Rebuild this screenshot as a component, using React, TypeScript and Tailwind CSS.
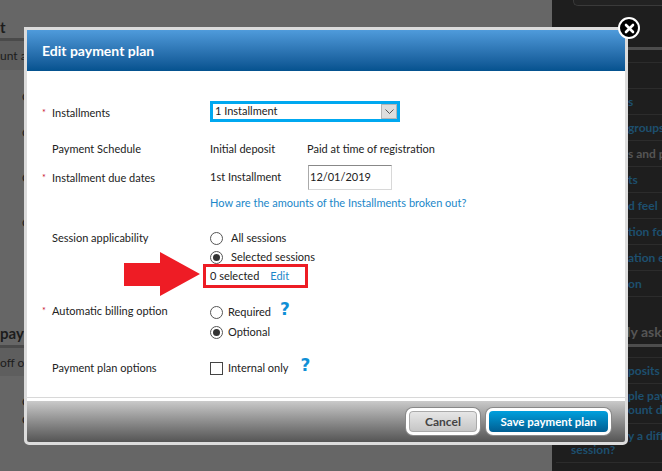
const font = "font-['Lato','Liberation_Sans',sans-serif]";

const sideLinks = [
  { text: "", color: "text-[#1d4f6e]" },
  { text: "s", color: "text-[#1d4f6e]" },
  { text: "groups", color: "text-[#1d4f6e]" },
  { text: "s and p", color: "text-[#555]" },
  { text: "ts", color: "text-[#1d4f6e]" },
  { text: "d feel", color: "text-[#1d4f6e]" },
  { text: "tion fo", color: "text-[#1d4f6e]" },
  { text: "ation e", color: "text-[#1d4f6e]" },
  { text: "on", color: "text-[#1d4f6e]" },
];

function Radio({ checked }: { checked?: boolean }) {
  return (
    <span className="flex size-[13px] shrink-0 items-center justify-center rounded-full border border-[#555] bg-white">
      {checked && <span className="size-[7px] rounded-full bg-[#333]" />}
    </span>
  );
}

function Help() {
  return <span className="font-['DejaVu_Sans',sans-serif] text-[17px] leading-none font-bold text-[#0f8fd6]">?</span>;
}

function Row({
  label,
  required,
  className,
  labelClass,
  children,
}: {
  label: string;
  required?: boolean;
  className?: string;
  labelClass?: string;
  children: React.ReactNode;
}) {
  return (
    <div className={`flex ${className ?? ""}`}>
      <div className={`relative w-[168px] shrink-0 pl-[10px] leading-[16px] ${labelClass ?? ""}`}>
        {required && <span className="absolute left-0 text-[9px] text-[#c8102e]">*</span>}
        {label}
      </div>
      <div className="min-w-0 flex-1">{children}</div>
    </div>
  );
}

export default function App() {
  return (
    <div className={`relative flex h-[471px] w-[662px] overflow-hidden bg-[#666] ${font}`}>
      {/* page behind the overlay */}
      <div className="w-[552px] shrink-0 pt-[19px] text-[#1c1c1c]">
        <div className="h-[22px] border-b-[3px] border-[#4a4a4a] text-[15px] leading-[16px] font-bold">t</div>
        <div className="h-[29px] bg-[#5e5e5e] pt-[7px] text-[12px] leading-[16px]">unt a</div>
        <div className="h-[256px] pt-[20px] pl-[22px] text-[12px] leading-[14px]">
          <div>O</div>
          <div className="mt-[22px]">O</div>
          <div className="mt-[31px]">O</div>
          <div className="mt-[31px]">O</div>
        </div>
        <div className="h-[22px] border-b-[3px] border-[#4a4a4a] pt-0 text-[15px] leading-[14px] font-bold">pay</div>
        <div className="h-[28px] bg-[#5e5e5e] pt-[7px] text-[12px] leading-[16px]">off ou</div>
        <div className="pt-[19px] pl-[22px] text-[12px] leading-[14px]">
          <div>O</div>
          <div className="mt-[4px]">O</div>
        </div>
      </div>
      <div className="flex-1 overflow-hidden bg-[#1e1e1e] pl-[4px] text-[12px] font-bold whitespace-nowrap">
        <div className="ml-[17px] h-[6px] rounded-bl-[5px] border-b border-l border-[#3a3a3a] bg-[#222]" />
        <div className="mt-[41px] h-[3px] bg-[#4d4d4d]" />
        <div className="mt-[12px]">
          {sideLinks.map((l) => (
            <div key={l.text} className={`h-[26px] border-t border-[#2c2c2c] pt-[4px] pl-[72px] leading-[18px] ${l.color}`}>
              {l.text}
            </div>
          ))}
        </div>
        <div className="h-[48px] border-t border-[#2c2c2c] pt-[26px] pl-[71px] text-[14px] leading-[18px] text-[#555]">ly ask</div>
        <div className="h-[3px] bg-[#4d4d4d]" />
        <div className="mt-[10px] text-[#1d4f6e]">
          <div className="h-[26px] border-t border-[#2c2c2c] pt-[4px] pl-[72px] leading-[18px]">posits w</div>
          <div className="h-[40px] border-t border-[#2c2c2c] pt-[5px] pl-[72px] leading-[14px]">
            <div>ple pay</div>
            <div>ount du</div>
          </div>
          <div className="h-[40px] border-t border-b border-[#2c2c2c] pt-[5px] pl-[15px] leading-[14px]">
            <div className="pl-[57px]">y a diff</div>
            <div>session?</div>
          </div>
        </div>
      </div>

      {/* modal */}
      <div className="absolute top-[27px] left-[24px] flex h-[418px] w-[604px] flex-col rounded-b-[5px] border-[3px] border-[#dcdcdc] bg-white text-[11px] text-[#222]">
        <div className="flex h-[41px] shrink-0 items-center bg-gradient-to-b from-[#4f9bdb] to-[#04528f] pl-[15px] text-[14px] font-bold text-white">
          Edit payment plan
        </div>

        <div className="flex-1 pt-[30px] pl-[15px]">
          <Row label="Installments" required labelClass="pt-[4px]">
            <div className="flex h-[21px] w-[190px] items-center border-[3px] border-[#00a8f0] bg-white pl-[2px]">
              <span className="flex-1">1 Installment</span>
              <span className="flex h-[15px] w-[16px] items-center justify-center border border-[#b5b5b5] bg-[#dedede]">
                <svg width="9" height="5" viewBox="0 0 9 5" fill="none" stroke="#555">
                  <path d="M0.5 0.5 4.5 4.5 8.5 0.5" />
                </svg>
              </span>
            </div>
          </Row>
          <Row label="Payment Schedule" className="mt-[19px]">
            <div className="flex leading-[16px]">
              <span className="w-[97px]">Initial deposit</span>
              <span>Paid at time of registration</span>
            </div>
          </Row>
          <Row label="Installment due dates" required className="mt-[8px]" labelClass="pt-[5px]">
            <div className="flex items-center">
              <span className="w-[98px]">1st Installment</span>
              <span className="flex h-[25px] w-[84px] items-center border border-[#d8d8d8] border-t-[#888] border-l-[#aaa] pl-[1px]">12/01/2019</span>
            </div>
            <div className="mt-[5px] leading-[16px] text-[#1b87c9]">How are the amounts of the Installments broken out?</div>
          </Row>
          <Row label="Session applicability" className="mt-[19px]">
            <div className="flex h-[16px] items-center gap-[8px]">
              <Radio />
              All sessions
            </div>
            <div className="mt-[3px] flex h-[16px] items-center gap-[8px]">
              <Radio checked />
              Selected sessions
            </div>
            <div className="-mt-[1px] -ml-[7px] flex h-[24px] w-[105px] items-center border-[3px] border-[#ed1c24] pl-[4px]">
              0 selected
              <span className="ml-[11px] text-[#1b87c9]">Edit</span>
            </div>
          </Row>
          <Row label="Automatic billing option" required className="mt-[15px]">
            <div className="mt-[1px] flex h-[16px] items-center gap-[5px]">
              <Radio />
              Required
              <span className="ml-[4px] -mt-[4px]"><Help /></span>
            </div>
            <div className="mt-[4px] flex h-[16px] items-center gap-[5px]">
              <Radio checked />
              Optional
            </div>
          </Row>
          <Row label="Payment plan options" className="mt-[20px]">
            <div className="flex h-[16px] items-center gap-[5px]">
              <span className="size-[13px] border border-[#444] bg-white" />
              Internal only
              <span className="ml-[7px] -mt-[4px]"><Help /></span>
            </div>
          </Row>
        </div>

        <div className="shrink-0 border-t border-[#d8d8d8] pt-[3px]">
          <div className="flex h-[41px] items-center justify-end gap-[6px] rounded-b-[2px] bg-gradient-to-b from-[#cacaca] to-[#555] pr-[14px]">
            <button className="h-[27px] w-[74px] rounded-[7px] border-[3px] border-white bg-gradient-to-b from-[#e8e8e8] to-[#c4c4c4] text-[12px] font-bold text-[#444] shadow-[0_0_0_1px_#888,inset_0_0_0_1px_#aaa]">
              Cancel
            </button>
            <button className="h-[27px] w-[125px] rounded-[7px] border-[3px] border-white bg-gradient-to-b from-[#00a0de] to-[#015e92] text-[11.5px] font-bold text-white shadow-[0_0_0_1px_#888]">
              Save payment plan
            </button>
          </div>
        </div>
      </div>

      {/* arrow annotation */}
      <svg className="absolute top-[252px] left-[124px]" width="76" height="44" viewBox="0 0 76 44">
        <path d="M0 11H36V0L76 22 36 44V34H0Z" fill="#ee1c25" />
      </svg>

      {/* close button */}
      <div className="absolute top-[17px] left-[618px] flex size-[22px] items-center justify-center rounded-full border-2 border-white bg-black">
        <svg width="11" height="11" viewBox="0 0 11 11" stroke="#fff" strokeWidth="2.6" strokeLinecap="round">
          <path d="M2 2 9 9M9 2 2 9" />
        </svg>
      </div>
    </div>
  );
}
